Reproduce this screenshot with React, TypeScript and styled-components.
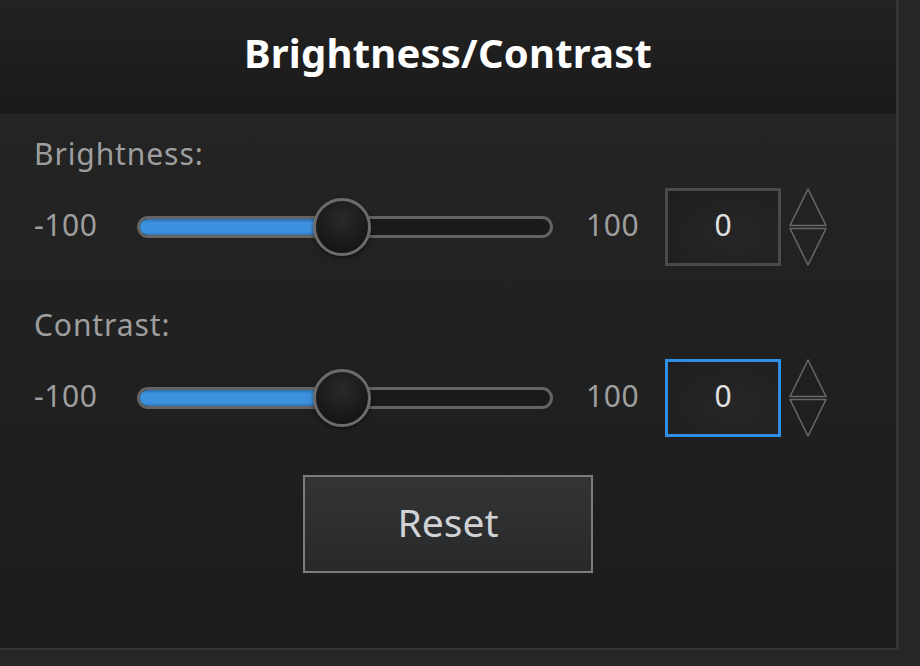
import React from "react";
import styled, { createGlobalStyle } from "styled-components";

const GlobalStyle = createGlobalStyle`
  html, body { margin: 0; padding: 0; background: #262628; }
  body { font-family: "Noto Sans", "Open Sans", sans-serif; }
`;

const Page = styled.div`
  width: 920px;
  height: 666px;
  background: #262628;
  overflow: hidden;
`;

const Panel = styled.div`
  width: 896px;
  height: 648px;
  display: flex;
  flex-direction: column;
  border-right: 3px solid #333335;
  border-bottom: 2px solid #333335;
`;

const Header = styled.div`
  height: 114px;
  box-sizing: border-box;
  padding-bottom: 10px;
  flex: none;
  display: flex;
  align-items: center;
  justify-content: center;
  background: linear-gradient(#222222, #1a1a1a);
`;

const Title = styled.h1`
  margin: 0;
  font-size: 40px;
  font-weight: 700;
  color: #ffffff;
  letter-spacing: 0.2px;
`;

const Body = styled.div`
  flex: 1;
  display: flex;
  flex-direction: column;
  padding: 20px 0 0 34px;
  background: linear-gradient(#242424, #1c1c1c);
`;

const Label = styled.div<{ $mt?: number }>`
  margin-top: ${(p) => p.$mt ?? 0}px;
  font-size: 30px;
  line-height: 40px;
  letter-spacing: 0.9px;
  color: #9e9e9e;
`;

const SliderRow = styled.div<{ $mt: number }>`
  margin-top: ${(p) => p.$mt}px;
  height: 78px;
  display: flex;
  align-items: center;
`;

const RangeText = styled.span<{ $w: number; $pl?: number }>`
  width: ${(p) => p.$w}px;
  padding-left: ${(p) => p.$pl ?? 0}px;
  padding-bottom: 6px;
  box-sizing: border-box;
  font-size: 30px;
  letter-spacing: 0.6px;
  color: #9e9e9e;
  flex: none;
`;

const Track = styled.div`
  position: relative;
  width: 416px;
  height: 22px;
  box-sizing: border-box;
  border: 3px solid #636363;
  border-radius: 11px;
  background: #1a1a1a;
  flex: none;
`;

const Fill = styled.div`
  height: 100%;
  border-radius: 8px 0 0 8px;
  background: linear-gradient(#2c6fb0 0%, #3d92e0 25%, #3d92e0 80%, #2f76ba 100%);
`;

const Thumb = styled.div`
  position: absolute;
  top: 50%;
  width: 58px;
  height: 58px;
  box-sizing: border-box;
  border-radius: 50%;
  border: 3px solid #6b6b6b;
  background: radial-gradient(circle at 50% 35%, #2a2a2a, #151515 75%);
  transform: translate(-50%, -50%);
  box-shadow: 0 2px 4px rgba(0, 0, 0, 0.5);
`;

const SpinBox = styled.div<{ $focused?: boolean }>`
  width: 116px;
  height: 78px;
  box-sizing: border-box;
  padding-bottom: 6px;
  border: 3px solid ${(p) => (p.$focused ? "#2f8ee6" : "#4a4a4a")};
  background: radial-gradient(ellipse at 60% 60%, #262626, #1e1e1e);
  display: flex;
  align-items: center;
  justify-content: center;
  font-size: 30px;
  color: #e0e0e0;
  flex: none;
`;

const Arrows = styled.svg`
  margin-left: 8px;
  flex: none;
`;

const ButtonRow = styled.div`
  margin-top: 38px;
  margin-left: -34px;
  display: flex;
  justify-content: center;
`;

const ResetButton = styled.button`
  width: 290px;
  height: 98px;
  box-sizing: border-box;
  border: 2px solid #7c7c7c;
  background: linear-gradient(#333436, #28292b);
  color: #d0d2d5;
  font-family: "Noto Sans", "Open Sans", sans-serif;
  font-size: 39px;
  padding: 0 0 6px 0;
  cursor: pointer;
`;

function SpinArrows() {
  return (
    <Arrows width="38" height="78" viewBox="0 0 38 78">
      <path d="M19 1 L37 37.5 L1 37.5 Z" fill="none" stroke="#666" strokeWidth="1.6" strokeLinejoin="round" />
      <path d="M1 40.5 L37 40.5 L19 77 Z" fill="none" stroke="#666" strokeWidth="1.6" strokeLinejoin="round" />
    </Arrows>
  );
}

function SliderControl({ value, focused, mt }: { value: number; focused?: boolean; mt: number }) {
  const trackInner = 410;
  const pos = 205 - 3 + (value / 200) * trackInner;
  return (
    <SliderRow $mt={mt}>
      <RangeText $w={103}>-100</RangeText>
      <Track>
        <Fill style={{ width: `${pos}px` }} />
        <Thumb style={{ left: `${pos}px` }} />
      </Track>
      <RangeText $w={112} $pl={33}>100</RangeText>
      <SpinBox $focused={focused}>{value}</SpinBox>
      <SpinArrows />
    </SliderRow>
  );
}

export default function App() {
  return (
    <Page>
      <GlobalStyle />
      <Panel>
        <Header>
          <Title>Brightness/Contrast</Title>
        </Header>
        <Body>
          <Label>Brightness:</Label>
          <SliderControl value={0} mt={14} />
          <Label $mt={39}>Contrast:</Label>
          <SliderControl value={0} focused mt={14} />
          <ButtonRow>
            <ResetButton>Reset</ResetButton>
          </ButtonRow>
        </Body>
      </Panel>
    </Page>
  );
}
